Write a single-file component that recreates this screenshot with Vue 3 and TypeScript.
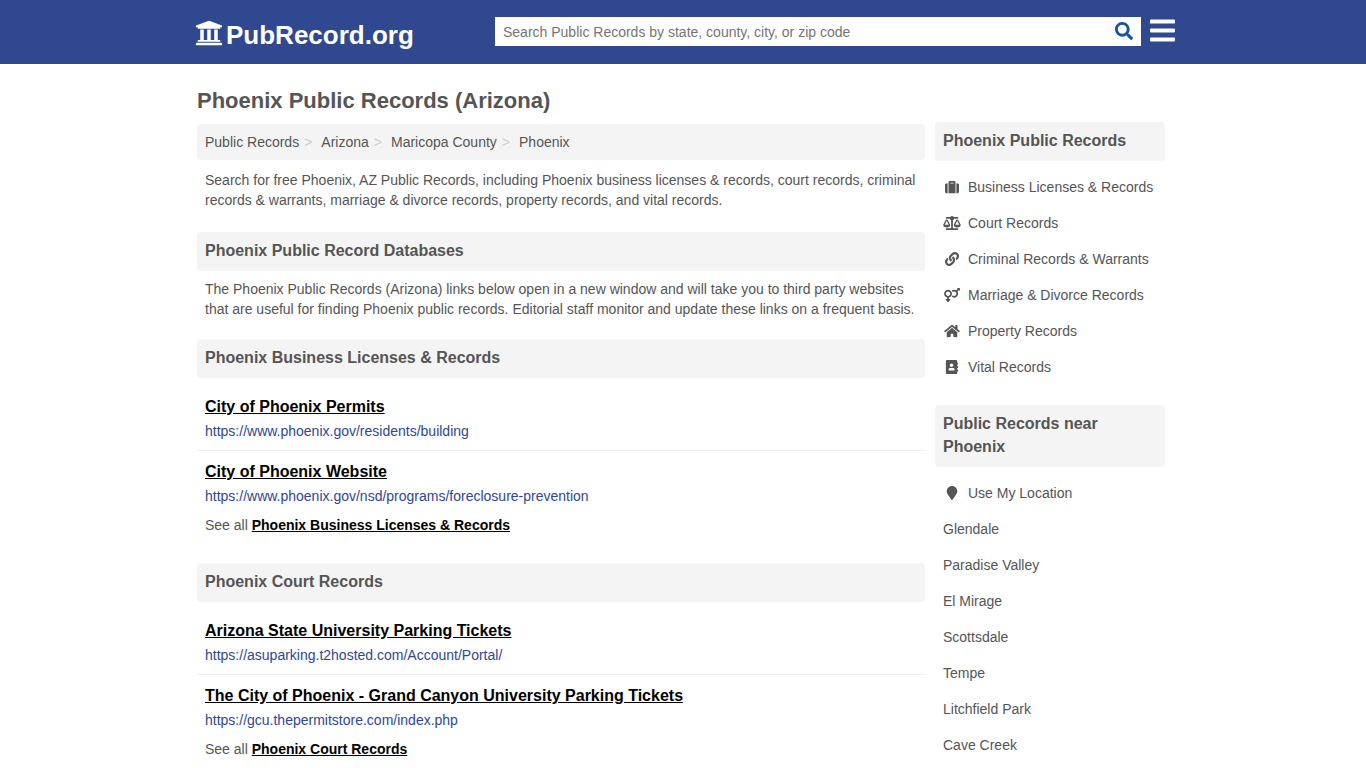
<script setup lang="ts">
import { ref } from 'vue'

interface Icon {
  w: number
  d: string
}

interface Listing {
  title: string
  url: string
}

interface Section {
  title: string
  listings: Listing[]
}

const query = ref('')

const icons: Record<string, Icon> = {
  university: {
    w: 512,
    d: 'M496 128v16a8 8 0 0 1-8 8h-24v12c0 6.627-5.373 12-12 12H60c-6.627 0-12-5.373-12-12v-12H24a8 8 0 0 1-8-8v-16a8 8 0 0 1 4.941-7.392l232-88a7.996 7.996 0 0 1 6.118 0l232 88A8 8 0 0 1 496 128zm-24 304H40c-13.255 0-24 10.745-24 24v16a8 8 0 0 0 8 8h464a8 8 0 0 0 8-8v-16c0-13.255-10.745-24-24-24zM96 192v192H60c-6.627 0-12 5.373-12 12v20h416v-20c0-6.627-5.373-12-12-12h-36V192h-64v192h-64V192h-64v192h-64V192H96z',
  },
  search: {
    w: 512,
    d: 'M505 442.7L405.3 343c-4.5-4.5-10.6-7-17-7H372c27.6-35.3 44-79.7 44-128C416 93.1 322.9 0 208 0S0 93.1 0 208s93.1 208 208 208c48.3 0 92.7-16.4 128-44v16.3c0 6.4 2.5 12.5 7 17l99.7 99.7c9.4 9.4 24.6 9.4 33.9 0l28.3-28.3c9.4-9.4 9.4-24.6.1-34zM208 336c-70.7 0-128-57.2-128-128 0-70.7 57.2-128 128-128 70.7 0 128 57.2 128 128 0 70.7-57.2 128-128 128z',
  },
  bars: {
    w: 448,
    d: 'M16 132h416c8.837 0 16-7.163 16-16V76c0-8.837-7.163-16-16-16H16C7.163 60 0 67.163 0 76v40c0 8.837 7.163 16 16 16zm0 160h416c8.837 0 16-7.163 16-16v-40c0-8.837-7.163-16-16-16H16c-8.837 0-16 7.163-16 16v40c0 8.837 7.163 16 16 16zm0 160h416c8.837 0 16-7.163 16-16v-40c0-8.837-7.163-16-16-16H16c-8.837 0-16 7.163-16 16v40c0 8.837 7.163 16 16 16z',
  },
  suitcase: {
    w: 512,
    d: 'M128 480h256V80c0-26.5-21.5-48-48-48H176c-26.5 0-48 21.5-48 48v400zm64-384h128v32H192V96zm320 80v256c0 26.5-21.5 48-48 48h-48V128h48c26.5 0 48 21.5 48 48zM96 480H48c-26.5 0-48-21.5-48-48V176c0-26.5 21.5-48 48-48h48v352z',
  },
  scale: {
    w: 640,
    d: 'M256 336h-.02c0-16.18 1.34-8.73-85.05-181.51-17.65-35.29-68.19-35.36-85.87 0C-2.06 328.75.02 320.33.02 336H0c0 44.18 57.31 80 128 80s128-35.82 128-80zM128 176l72 144H56l72-144zm511.98 160c0-16.18 1.34-8.73-85.05-181.51-17.65-35.29-68.19-35.36-85.87 0-87.12 174.26-85.04 165.84-85.04 181.51H384c0 44.18 57.31 80 128 80s128-35.82 128-80h-.02zM440 320l72-144 72 144H440zm88 128H352V153.25c23.51-10.29 41.16-31.48 46.39-57.25H528c8.84 0 16-7.16 16-16V48c0-8.84-7.16-16-16-16H383.64C369.04 12.68 346.09 0 320 0s-49.04 12.68-63.64 32H112c-8.84 0-16 7.16-16 16v32c0 8.84 7.16 16 16 16h129.61c5.23 25.76 22.87 46.96 46.39 57.25V448H112c-8.84 0-16 7.16-16 16v32c0 8.84 7.16 16 16 16h416c8.84 0 16-7.16 16-16v-32c0-8.84-7.16-16-16-16z',
  },
  link: {
    w: 512,
    d: 'M326.612 185.391c59.747 59.809 58.927 155.698.36 214.59-.11.12-.24.25-.36.37l-67.2 67.2c-59.27 59.27-155.699 59.262-214.96 0-59.27-59.26-59.27-155.7 0-214.96l37.106-37.106c9.84-9.84 26.786-3.3 27.294 10.606.648 17.722 3.826 35.527 9.69 52.721 1.986 5.822.567 12.262-3.783 16.612l-13.087 13.087c-28.026 28.026-28.905 73.66-1.155 101.96 28.024 28.579 74.086 28.749 102.325.51l67.2-67.19c28.191-28.191 28.073-73.757 0-101.83-3.701-3.694-7.429-6.564-10.341-8.569a16.037 16.037 0 0 1-6.947-12.606c-.396-10.567 3.348-21.456 11.698-29.806l21.054-21.055c5.521-5.521 14.182-6.199 20.584-1.731a152.482 152.482 0 0 1 20.522 17.197zM467.547 44.449c-59.261-59.262-155.69-59.27-214.96 0l-67.2 67.2c-.12.12-.25.25-.36.37-58.566 58.892-59.387 154.781.36 214.59a152.454 152.454 0 0 0 20.521 17.196c6.402 4.468 15.064 3.789 20.584-1.731l21.054-21.055c8.35-8.35 12.094-19.239 11.698-29.806a16.037 16.037 0 0 0-6.947-12.606c-2.912-2.005-6.64-4.875-10.341-8.569-28.073-28.073-28.191-73.639 0-101.83l67.2-67.19c28.239-28.239 74.3-28.069 102.325.51 27.75 28.3 26.872 73.934-1.155 101.96l-13.087 13.087c-4.35 4.35-5.769 10.79-3.783 16.612 5.864 17.194 9.042 34.999 9.69 52.721.509 13.906 17.454 20.446 27.294 10.606l37.106-37.106c59.271-59.259 59.271-155.699.001-214.959z',
  },
  venusMars: {
    w: 576,
    d: 'M564 0h-79c-10.7 0-16 12.9-8.5 20.4l16.9 16.9-48.7 48.7C422.5 72.1 396.2 64 368 64c-33.7 0-64.6 11.6-89.2 30.9 14 16.7 25 36 32.1 57.1 14.5-14.8 34.7-24 57.1-24 44.1 0 80 35.9 80 80s-35.9 80-80 80c-22.3 0-42.6-9.2-57.1-24-7.1 21.1-18 40.4-32.1 57.1 24.5 19.4 55.5 30.9 89.2 30.9 79.5 0 144-64.5 144-144 0-28.2-8.1-54.5-22.1-76.7l48.7-48.7 16.9 16.9c2.4 2.4 5.4 3.5 8.4 3.5 6.2 0 12.1-4.8 12.1-12V12c0-6.6-5.4-12-12-12zM144 64C64.5 64 0 128.5 0 208c0 68.5 47.9 125.9 112 140.4V400H76c-6.6 0-12 5.4-12 12v40c0 6.6 5.4 12 12 12h36v36c0 6.6 5.4 12 12 12h40c6.6 0 12-5.4 12-12v-36h36c6.6 0 12-5.4 12-12v-40c0-6.6-5.4-12-12-12h-36v-51.6c64.1-14.6 112-71.9 112-140.4 0-79.5-64.5-144-144-144zm0 224c-44.1 0-80-35.9-80-80s35.9-80 80-80 80 35.9 80 80-35.9 80-80 80z',
  },
  home: {
    w: 576,
    d: 'M280.37 148.26L96 300.11V464a16 16 0 0 0 16 16l112.06-.29a16 16 0 0 0 15.92-16V368a16 16 0 0 1 16-16h64a16 16 0 0 1 16 16v95.64a16 16 0 0 0 16 16.05L464 480a16 16 0 0 0 16-16V300L295.67 148.26a12.19 12.19 0 0 0-15.3 0zM571.6 251.47L488 182.56V44.05a12 12 0 0 0-12-12h-56a12 12 0 0 0-12 12v72.61L318.47 43a48 48 0 0 0-61 0L4.34 251.47a12 12 0 0 0-1.6 16.9l25.5 31A12 12 0 0 0 45.15 301l235.22-193.74a12.19 12.19 0 0 1 15.3 0L530.9 301a12 12 0 0 0 16.9-1.6l25.5-31a12 12 0 0 0-1.7-16.93z',
  },
  addressBook: {
    w: 448,
    d: 'M436 160c6.6 0 12-5.4 12-12v-40c0-6.6-5.4-12-12-12h-20V48c0-26.5-21.5-48-48-48H48C21.5 0 0 21.5 0 48v416c0 26.5 21.5 48 48 48h320c26.5 0 48-21.5 48-48v-48h20c6.6 0 12-5.4 12-12v-40c0-6.6-5.4-12-12-12h-20v-64h20c6.6 0 12-5.4 12-12v-40c0-6.6-5.4-12-12-12h-20v-64h20zm-228-32c35.3 0 64 28.7 64 64s-28.7 64-64 64-64-28.7-64-64 28.7-64 64-64zm112 236.8c0 10.6-10 19.2-22.4 19.2H118.4C106 384 96 375.4 96 364.8v-19.2c0-31.8 30.1-57.6 67.2-57.6h5c12.3 5.1 25.7 8 39.8 8s27.6-2.9 39.8-8h5c37.1 0 67.2 25.8 67.2 57.6v19.2z',
  },
  marker: {
    w: 384,
    d: 'M172.268 501.67C26.97 291.031 0 269.413 0 192 0 85.961 85.961 0 192 0s192 85.961 192 192c0 77.413-26.97 99.031-172.268 309.67-9.535 13.774-29.93 13.773-39.464 0z',
  },
}

const crumbs = ['Public Records', 'Arizona', 'Maricopa County', 'Phoenix']

const sections: Section[] = [
  {
    title: 'Phoenix Business Licenses & Records',
    listings: [
      { title: 'City of Phoenix Permits', url: 'https://www.phoenix.gov/residents/building' },
      { title: 'City of Phoenix Website', url: 'https://www.phoenix.gov/nsd/programs/foreclosure-prevention' },
    ],
  },
  {
    title: 'Phoenix Court Records',
    listings: [
      { title: 'Arizona State University Parking Tickets', url: 'https://asuparking.t2hosted.com/Account/Portal/' },
      { title: 'The City of Phoenix - Grand Canyon University Parking Tickets', url: 'https://gcu.thepermitstore.com/index.php' },
    ],
  },
]

const menus: { title: string; items: { label: string; icon?: string }[] }[] = [
  {
    title: 'Phoenix Public Records',
    items: [
      { label: 'Business Licenses & Records', icon: 'suitcase' },
      { label: 'Court Records', icon: 'scale' },
      { label: 'Criminal Records & Warrants', icon: 'link' },
      { label: 'Marriage & Divorce Records', icon: 'venusMars' },
      { label: 'Property Records', icon: 'home' },
      { label: 'Vital Records', icon: 'addressBook' },
    ],
  },
  {
    title: 'Public Records near Phoenix',
    items: [
      { label: 'Use My Location', icon: 'marker' },
      { label: 'Glendale' },
      { label: 'Paradise Valley' },
      { label: 'El Mirage' },
      { label: 'Scottsdale' },
      { label: 'Tempe' },
      { label: 'Litchfield Park' },
      { label: 'Cave Creek' },
    ],
  },
]
</script>

<template>
  <div class="page">
    <header class="top">
      <div class="top-inner">
        <a class="brand" href="#">
          <svg class="brand-icon" viewBox="0 0 512 512" aria-hidden="true"><path :d="icons.university.d" /></svg>
          <span>PubRecord.org</span>
        </a>
        <form class="search" role="search" @submit.prevent>
          <input
            v-model="query"
            type="text"
            aria-label="Search Public Records"
            placeholder="Search Public Records by state, county, city, or zip code"
          />
          <button type="submit" aria-label="Search">
            <svg viewBox="0 0 512 512" aria-hidden="true"><path :d="icons.search.d" /></svg>
          </button>
        </form>
        <button class="menu-button" type="button" aria-label="Menu">
          <svg viewBox="0 0 448 512" aria-hidden="true"><path :d="icons.bars.d" /></svg>
        </button>
      </div>
    </header>

    <div class="content">
      <h1>Phoenix Public Records (Arizona)</h1>
      <div class="columns">
        <main>
          <nav aria-label="Breadcrumb">
            <ol class="crumbs">
              <li v-for="crumb in crumbs" :key="crumb"><a href="#">{{ crumb }}</a></li>
            </ol>
          </nav>
          <p>
            Search for free Phoenix, AZ Public Records, including Phoenix business licenses &amp; records, court
            records, criminal records &amp; warrants, marriage &amp; divorce records, property records, and vital
            records.
          </p>
          <h2 class="databases">Phoenix Public Record Databases</h2>
          <p>
            The Phoenix Public Records (Arizona) links below open in a new window and will take you to third party
            websites that are useful for finding Phoenix public records. Editorial staff monitor and update these
            links on a frequent basis.
          </p>
          <section v-for="section in sections" :key="section.title">
            <h2>{{ section.title }}</h2>
            <ul class="listings">
              <li v-for="item in section.listings" :key="item.title">
                <a class="listing-title" href="#">{{ item.title }}</a>
                <span class="listing-url">{{ item.url }}</span>
              </li>
            </ul>
            <div class="see-all">See all <a href="#">{{ section.title }}</a></div>
          </section>
        </main>

        <aside>
          <section v-for="menu in menus" :key="menu.title" class="side">
            <h2>{{ menu.title }}</h2>
            <ul>
              <li v-for="item in menu.items" :key="item.label">
                <a href="#">
                  <svg
                    v-if="item.icon"
                    class="side-icon"
                    :viewBox="`0 0 ${icons[item.icon].w} 512`"
                    aria-hidden="true"
                  ><path :d="icons[item.icon].d" /></svg>
                  <span>{{ item.label }}</span>
                </a>
              </li>
            </ul>
          </section>
        </aside>
      </div>
    </div>
  </div>
</template>

<style>
body {
  margin: 0;
  background: #fff;
}
</style>

<style scoped>
.page {
  font-family: "Liberation Sans", Arial, sans-serif;
  font-size: 14px;
  line-height: 20px;
  color: #555;
}

svg {
  display: block;
  fill: currentColor;
}

a {
  color: inherit;
  text-decoration: none;
}

ul,
ol {
  list-style: none;
  margin: 0;
  padding: 0;
}

button {
  border: 0;
  padding: 0;
  background: none;
  cursor: pointer;
}

.top {
  background: #2f488f;
}

.top-inner {
  box-sizing: border-box;
  max-width: 984px;
  height: 64px;
  margin: 0 auto;
  padding-left: 4px;
  display: flex;
  align-items: center;
}

.brand {
  flex: 1;
  display: flex;
  align-items: center;
  gap: 3px;
  padding-top: 5px;
  color: #fff;
  font-size: 26px;
  line-height: 32px;
  font-weight: bold;
}

.brand-icon {
  width: 28px;
  height: 28px;
  margin-bottom: 4px;
}

.search {
  flex: 0 1 646px;
  box-sizing: border-box;
  height: 29px;
  margin-right: 9px;
  margin-bottom: 2px;
  padding-right: 8px;
  display: flex;
  align-items: center;
  background: #fff;
}

.search input {
  flex: 1;
  min-width: 0;
  height: 29px;
  box-sizing: border-box;
  border: 0;
  outline: 0;
  padding: 1px 8px 0;
  background: none;
  font: inherit;
  font-size: 14px;
  color: #555;
}

.search input::placeholder {
  color: #757575;
  opacity: 1;
}

.search button {
  color: #14559f;
}

.search svg {
  width: 18px;
  height: 18px;
}

.menu-button {
  color: #fff;
  padding-bottom: 3px;
}

.menu-button svg {
  width: 25px;
  height: 29px;
}

.content {
  box-sizing: border-box;
  max-width: 984px;
  margin: 0 auto;
  padding: 0 10px 0 6px;
}

h1 {
  margin: 0;
  padding: 21px 0 5px;
  font-size: 22px;
  line-height: 32px;
}

.columns {
  display: flex;
  align-items: flex-start;
  gap: 10px;
}

main {
  flex: 1;
  min-width: 0;
  padding-top: 2px;
}

aside {
  flex: 0 0 230px;
}

h2 {
  margin: 0 0 8px;
  padding: 7px 8px 9px;
  border-radius: 4px;
  background: #f4f4f4;
  font-size: 16px;
  line-height: 23px;
}

p {
  margin: 0 0 20px;
  padding: 0 8px;
}

.crumbs {
  display: flex;
  margin-bottom: 10px;
  padding: 8px;
  border-radius: 4px;
  background: #f4f4f4;
}

.crumbs li:not(:last-child)::after {
  content: ">";
  padding: 0 9px 0 5px;
  color: #ccc;
}

.databases {
  margin-top: 22px;
}

.listings li {
  padding: 9px 8px;
}

.listings li:not(:last-child) {
  border-bottom: 1px solid #eee;
}

.listing-title {
  display: table;
  margin-bottom: 2px;
  color: #000;
  font-size: 16px;
  line-height: 24px;
  font-weight: bold;
  text-decoration: underline;
}

.listing-url {
  display: block;
  color: #2f488f;
}

.see-all {
  padding: 0 8px;
  margin-bottom: 28px;
}

.see-all a {
  color: #000;
  font-weight: bold;
  text-decoration: underline;
}

main section:last-child .see-all {
  margin-bottom: 0;
}

.side + .side {
  margin-top: 20px;
}

.side a {
  display: flex;
  align-items: center;
  gap: 7px;
  padding: 8px;
}

.side-icon {
  width: 18px;
  height: 14px;
}
</style>
